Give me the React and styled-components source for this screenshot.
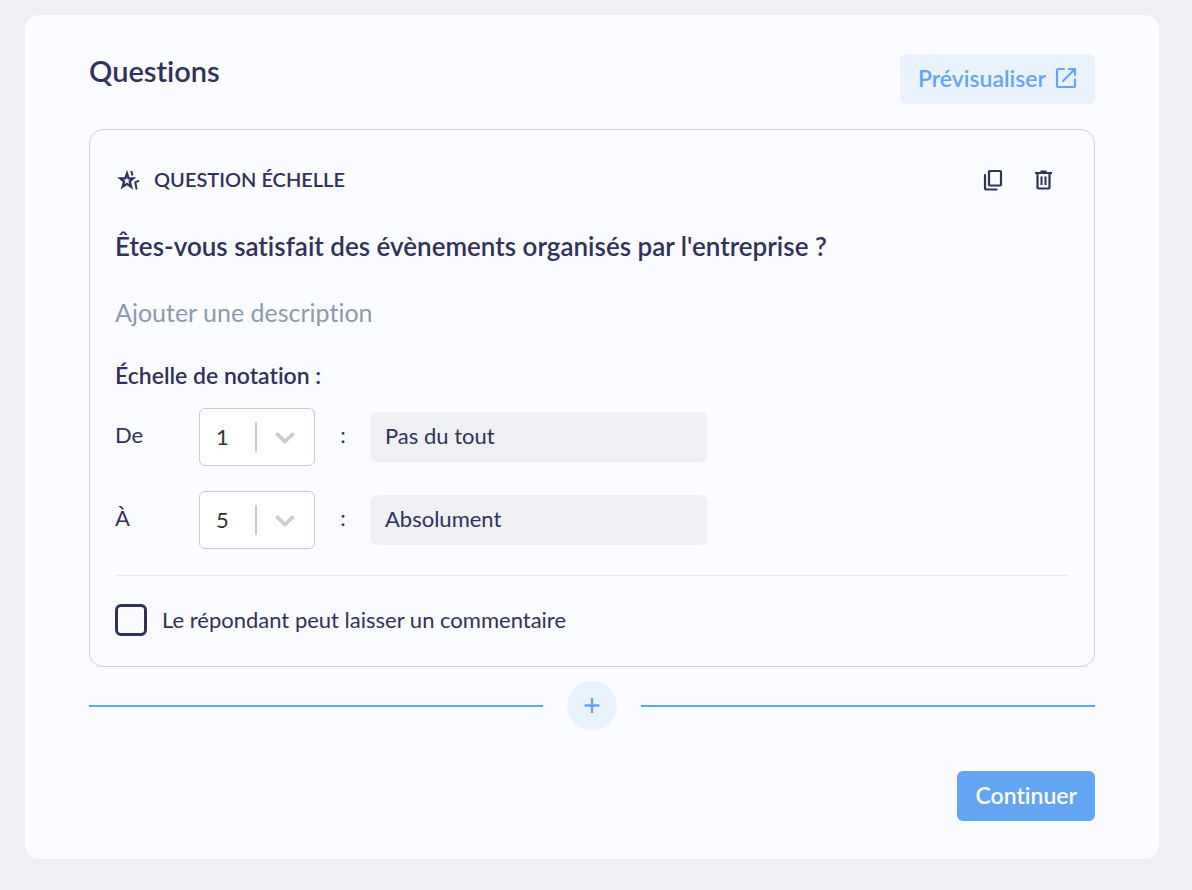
import React, { useState } from 'react';
import styled, { createGlobalStyle } from 'styled-components';

const GlobalStyle = createGlobalStyle`
:root{
    --navy:#32315a;
    --blue:#64a5f3;
    --lightBlue:#eaf3fd;
    --grey:#eff0f4;
    --paper:#fbfcff;
}
*{
    box-sizing:border-box;
}
body{
    margin:0;
    background:var(--grey);
    color:var(--navy);
    font-family:Lato, sans-serif;
    font-size:22px;
    font-variant-ligatures:none;
}
button, input, select{
    font:inherit;
    font-variant-ligatures:none;
    color:inherit;
}
`

const scale = [1, 2, 3, 4, 5, 6, 7, 8, 9, 10];

function OpenIcon(){
    return (
        <svg width="22" height="22" viewBox="0 0 22 22" fill="none" stroke="currentColor" strokeWidth="2.2" strokeLinecap="round" strokeLinejoin="round" aria-hidden="true">
            <path d="M9 2H3.5A1.5 1.5 0 0 0 2 3.5V18.5A1.5 1.5 0 0 0 3.5 20H18.5A1.5 1.5 0 0 0 20 18.5V12.5"/>
            <path d="M14 2H20V8M20 2L8 14"/>
        </svg>
    )
}

function StarIcon(){
    return (
        <svg width="24" height="24" viewBox="0 0 24 24" fill="none" stroke="currentColor" strokeWidth="2.3" aria-hidden="true">
            <path strokeLinejoin="miter" d="M10 5.5L11.6 10.4H16.2L12.7 13.5L14.2 18.8L10 15.8L5.6 18.8L7.1 13.6L3.3 10.4H8.4Z"/>
            <path strokeWidth="2" d="M14.3 3L15.5 7.5M22 12.6L18.3 14.3L19.6 21.5"/>
        </svg>
    )
}

function CopyIcon(){
    return (
        <svg width="24" height="24" viewBox="0 0 24 24" fill="none" stroke="currentColor" strokeWidth="2.2" strokeLinecap="round" strokeLinejoin="round" aria-hidden="true">
            <rect x="8" y="3" width="12" height="14.5" rx="1"/>
            <path d="M4 7V20.5A1 1 0 0 0 5 21.5H15.5"/>
        </svg>
    )
}

function TrashIcon(){
    return (
        <svg width="24" height="24" viewBox="0 0 24 24" fill="none" stroke="currentColor" strokeWidth="2.2" strokeLinejoin="round" aria-hidden="true">
            <path d="M4 5H21M9.5 3.5H15.500M6.500 5V19.500A1 1 0 0 0 7.500 20.500H17.500A1 1 0 0 0 18.500 19.500V5"/>
            <path strokeWidth="2" d="M10.500 8.500V17M14.500 8.500V17"/>
        </svg>
    )
}

function ScaleRow({ id, label, value, text }){
    const [level, setLevel] = useState(value);
    return (
        <ScaleLine>
            <ScaleLabel htmlFor={id}>{label}</ScaleLabel>
            <SelectBox>
                <select id={id} value={level} onChange={e => setLevel(Number(e.target.value))}>
                    {scale.map(n => <option key={n} value={n}>{n}</option>)}
                </select>
                <SelectMark>
                    <svg width="32" height="32" viewBox="0 0 20 20" fill="currentColor" aria-hidden="true">
                        <path d="M4.516 7.548c0.436-0.446 1.043-0.481 1.576 0l3.908 3.747 3.908-3.747c0.533-0.481 1.141-0.446 1.574 0 0.436 0.445 0.408 1.197 0 1.615-0.406 0.418-4.695 4.502-4.695 4.502-0.217 0.223-0.502 0.335-0.787 0.335s-0.57-0.112-0.789-0.335c0 0-4.287-4.084-4.695-4.502s-0.436-1.170 0-1.615z"/>
                    </svg>
                </SelectMark>
            </SelectBox>
            <Colon>:</Colon>
            <ScaleInput aria-label={`${label} ${value}`} defaultValue={text}/>
        </ScaleLine>
    )
}

export default function App(){
    return (
        <>
            <GlobalStyle/>
            <Panel>
                <PanelHeader>
                    <h1>Questions</h1>
                    <Button $soft type="button">Prévisualiser <OpenIcon/></Button>
                </PanelHeader>
                <QuestionCard>
                    <CardHeader>
                        <StarIcon/>
                        <h2>Question échelle</h2>
                        <IconButton type="button" aria-label="Dupliquer"><CopyIcon/></IconButton>
                        <IconButton type="button" aria-label="Supprimer"><TrashIcon/></IconButton>
                    </CardHeader>
                    <TitleInput aria-label="Question" defaultValue="Êtes-vous satisfait des évènements organisés par l'entreprise ?"/>
                    <DescriptionInput aria-label="Description" placeholder="Ajouter une description"/>
                    <ScaleSet>
                        <h3>Échelle de notation :</h3>
                        <ScaleRow id="from" label="De" value={1} text="Pas du tout"/>
                        <ScaleRow id="to" label="À" value={5} text="Absolument"/>
                    </ScaleSet>
                    <CommentLabel>
                        <input type="checkbox"/>
                        Le répondant peut laisser un commentaire
                    </CommentLabel>
                </QuestionCard>
                <AddRow>
                    <AddButton type="button" aria-label="Ajouter une question">
                        <svg width="16" height="16" viewBox="0 0 16 16" stroke="currentColor" strokeWidth="2.4" aria-hidden="true">
                            <path d="M8 0V15M0.5 7.5H15.5"/>
                        </svg>
                    </AddButton>
                </AddRow>
                <PanelFooter>
                    <Button type="button">Continuer</Button>
                </PanelFooter>
            </Panel>
        </>
    )
}

const Panel = styled.main`
margin:15px 33px 31px 25px;
padding:39px 64px 38px;
border-radius:14px;
background:var(--paper);
`

const PanelHeader = styled.header`
display:flex;
justify-content:space-between;
align-items:flex-start;
margin-bottom:25px;
h1{
    margin:0;
    font-size:29px;
    line-height:34px;
    font-weight:600;
}
`

const Button = styled.button`
display:flex;
align-items:center;
gap:9px;
height:50px;
padding:0 18px 3px;
border:0;
border-radius:6px;
font-size:23px;
font-weight:600;
cursor:pointer;
background:${props => props.$soft ? 'var(--lightBlue)' : 'var(--blue)'};
color:${props => props.$soft ? 'var(--blue)' : '#fff'};
`

const QuestionCard = styled.section`
padding:38px 25px 30px;
border:1px solid #d0d1dd;
border-radius:14px;
`

const CardHeader = styled.div`
display:flex;
align-items:center;
gap:26px;
height:24px;
padding:0 14px 0 2px;
margin-bottom:38px;
h2{
    flex:1;
    margin:0 0 0 -13px;
    padding-bottom:2px;
    font-size:20px;
    line-height:24px;
    font-weight:600;
    text-transform:uppercase;
}
`

const IconButton = styled.button`
display:flex;
padding:0;
border:0;
background:none;
cursor:pointer;
`

const TitleInput = styled.input`
display:block;
width:100%;
height:34px;
padding:0 0 2px;
border:0;
outline:0;
background:none;
font-size:26px;
font-weight:600;
`

const DescriptionInput = styled(TitleInput)`
margin-top:32px;
font-size:25px;
font-weight:400;
&::placeholder{
    color:#8c9aaf;
    opacity:1;
}
`

const ScaleSet = styled.div`
display:flex;
flex-direction:column;
gap:25px;
margin-top:32px;
padding-bottom:26px;
border-bottom:1px solid #e8e9ef;
h3{
    margin:0 0 -5px;
    font-size:23px;
    line-height:26px;
    font-weight:600;
}
`

const ScaleLine = styled.div`
display:flex;
align-items:center;
`

const ScaleLabel = styled.label`
width:84px;
padding-bottom:6px;
`

const SelectBox = styled.div`
position:relative;
width:116px;
height:58px;
select{
    appearance:none;
    width:100%;
    height:100%;
    padding:0 60px 2px 16px;
    border:1px solid #ccc;
    border-radius:6px;
    background:#fff;
    color:#333;
}
`

const SelectMark = styled.span`
position:absolute;
top:14px;
right:14px;
display:flex;
align-items:center;
height:30px;
padding-left:12px;
border-left:2px solid #ccc;
color:#ccc;
pointer-events:none;
`

const Colon = styled.span`
width:56px;
padding-bottom:6px;
text-align:center;
`

const ScaleInput = styled.input`
width:336px;
min-width:0;
height:50px;
padding:0 14px 3px;
border:0;
border-radius:6px;
background:var(--grey);
`

const CommentLabel = styled.label`
display:flex;
align-items:center;
gap:15px;
margin-top:28px;
line-height:32px;
input{
    appearance:none;
    flex:none;
    width:32px;
    height:32px;
    margin:0;
    border:3px solid var(--navy);
    border-radius:6px;
}
input:checked{
    background:var(--navy);
}
`

const AddRow = styled.div`
display:flex;
align-items:center;
gap:24px;
margin-top:14px;
&::before, &::after{
    content:"";
    flex:1;
    height:2px;
    background:var(--blue);
}
`

const AddButton = styled.button`
display:flex;
align-items:center;
justify-content:center;
width:50px;
height:50px;
padding:0;
border:0;
border-radius:50%;
background:var(--lightBlue);
color:var(--blue);
cursor:pointer;
`

const PanelFooter = styled.footer`
display:flex;
justify-content:flex-end;
margin-top:40px;
`
